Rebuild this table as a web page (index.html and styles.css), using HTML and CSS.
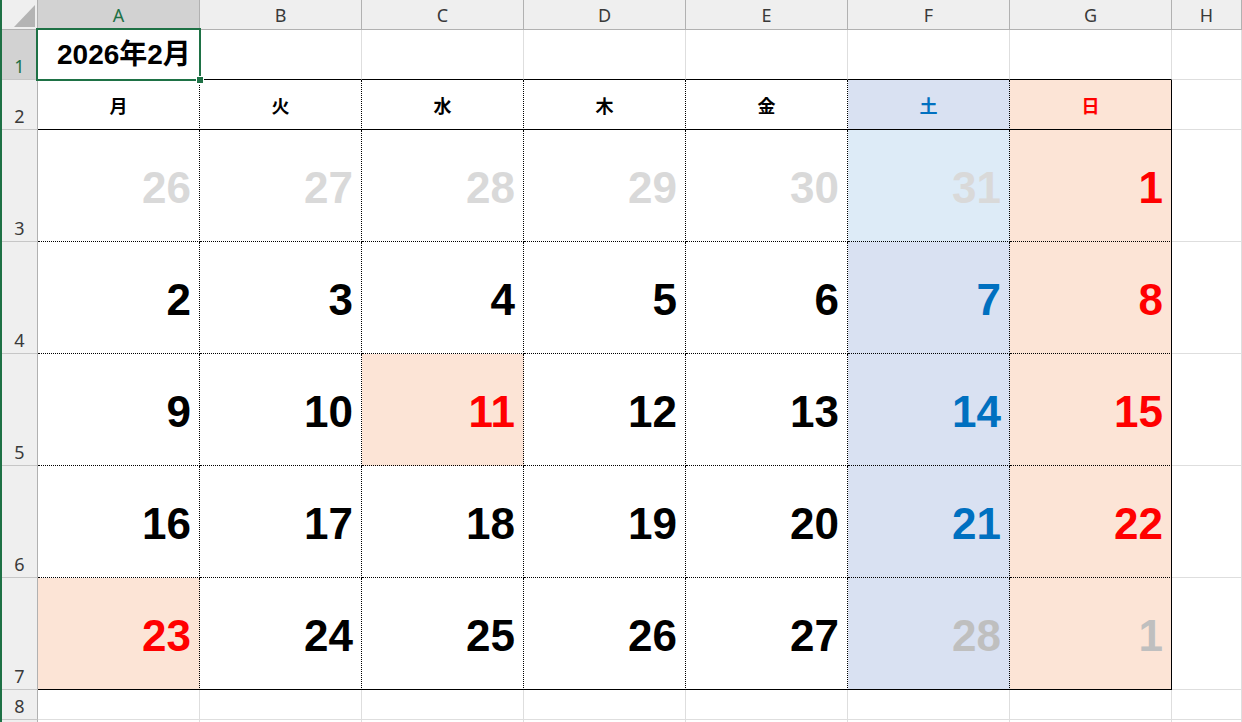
FILE: index.html
```html
<!DOCTYPE html>
<html lang="ja">
<head>
<meta charset="utf-8">
<title>2026年2月 カレンダー</title>
<link rel="stylesheet" href="styles.css">
</head>
<body>
<div class="sheet">
  <!-- column headers -->
  <div class="corner"><svg width="21" height="22" viewBox="0 0 21 22"><polygon points="0,22 21,22 21,0" fill="#b4b4b4"/></svg></div>
  <div class="ch sel">A</div>
  <div class="ch">B</div>
  <div class="ch">C</div>
  <div class="ch">D</div>
  <div class="ch">E</div>
  <div class="ch">F</div>
  <div class="ch">G</div>
  <div class="ch">H</div>

  <!-- row 1 -->
  <div class="rh sel">1</div>
  <div class="c title top-line">2026年2月</div>
  <div class="c top-line"></div>
  <div class="c top-line"></div>
  <div class="c top-line"></div>
  <div class="c top-line"></div>
  <div class="c top-line"></div>
  <div class="c top-line"></div>
  <div class="c"></div>

  <!-- row 2 -->
  <div class="rh">2</div>
  <div class="c dow">月</div>
  <div class="c dow">火</div>
  <div class="c dow">水</div>
  <div class="c dow">木</div>
  <div class="c dow">金</div>
  <div class="c dow sat t-blue">土</div>
  <div class="c dow sun t-red last-col">日</div>
  <div class="c"></div>

  <!-- row 3 -->
  <div class="rh">3</div>
  <div class="c day t-gray">26</div>
  <div class="c day t-gray">27</div>
  <div class="c day t-gray">28</div>
  <div class="c day t-gray">29</div>
  <div class="c day t-gray">30</div>
  <div class="c day sat-light t-gray">31</div>
  <div class="c day sun t-red last-col">1</div>
  <div class="c"></div>

  <!-- row 4 -->
  <div class="rh">4</div>
  <div class="c day">2</div>
  <div class="c day">3</div>
  <div class="c day">4</div>
  <div class="c day">5</div>
  <div class="c day">6</div>
  <div class="c day sat t-blue">7</div>
  <div class="c day sun t-red last-col">8</div>
  <div class="c"></div>

  <!-- row 5 -->
  <div class="rh">5</div>
  <div class="c day">9</div>
  <div class="c day">10</div>
  <div class="c day sun t-red">11</div>
  <div class="c day">12</div>
  <div class="c day">13</div>
  <div class="c day sat t-blue">14</div>
  <div class="c day sun t-red last-col">15</div>
  <div class="c"></div>

  <!-- row 6 -->
  <div class="rh">6</div>
  <div class="c day">16</div>
  <div class="c day">17</div>
  <div class="c day">18</div>
  <div class="c day">19</div>
  <div class="c day">20</div>
  <div class="c day sat t-blue">21</div>
  <div class="c day sun t-red last-col">22</div>
  <div class="c"></div>

  <!-- row 7 -->
  <div class="rh">7</div>
  <div class="c day bottom-line sun t-red">23</div>
  <div class="c day bottom-line">24</div>
  <div class="c day bottom-line">25</div>
  <div class="c day bottom-line">26</div>
  <div class="c day bottom-line">27</div>
  <div class="c day bottom-line sat t-gray2">28</div>
  <div class="c day bottom-line sun t-gray2 last-col">1</div>
  <div class="c"></div>

  <!-- row 8 -->
  <div class="rh">8</div>
  <div class="c"></div>
  <div class="c"></div>
  <div class="c"></div>
  <div class="c"></div>
  <div class="c"></div>
  <div class="c"></div>
  <div class="c"></div>
  <div class="c"></div>

  <!-- row 9 (only its top edge is visible) -->
  <div class="rh"></div>
  <div class="c"></div>
  <div class="c"></div>
  <div class="c"></div>
  <div class="c"></div>
  <div class="c"></div>
  <div class="c"></div>
  <div class="c"></div>
  <div class="c"></div>

  <!-- active cell selection -->
  <div class="selection"></div>
  <div class="fill-handle"></div>
</div>
</body>
</html>
```

FILE: styles.css
```css
html, body {
  margin: 0;
  padding: 0;
  background: #ffffff;
  overflow: hidden;
}

.sheet {
  position: relative;
  display: grid;
  grid-template-columns: 36px repeat(7, 162px) 1fr;
  grid-template-rows: 30px 50px 50px repeat(5, 112px) 30px 30px;
  width: 1240px;
  height: 722px;
  border-left: 2px solid #1e7145;
  font-family: "Liberation Sans", "Noto Sans CJK JP", sans-serif;
}

.corner {
  background: #efefef;
  border-right: 1px solid #b1b1b1;
  border-bottom: 1px solid #b1b1b1;
  display: flex;
  justify-content: flex-end;
  align-items: flex-end;
  padding: 0 2px 2px 0;
}

.ch {
  background: #efefef;
  border-right: 1px solid #b1b1b1;
  border-bottom: 1px solid #b1b1b1;
  display: flex;
  align-items: center;
  justify-content: center;
  font-family: "Noto Sans", sans-serif;
  font-size: 18px;
  line-height: 1;
  color: #3a3a3a;
}

.ch.sel {
  background: #d2d2d2;
  color: #1e7145;
}

.rh {
  background: #efefef;
  border-right: 1px solid #b1b1b1;
  border-bottom: 1px solid #c6c6c6;
  display: flex;
  align-items: flex-end;
  justify-content: center;
  padding-bottom: 4px;
  font-family: "Noto Sans", sans-serif;
  font-size: 18px;
  line-height: 1;
  color: #3a3a3a;
}

.rh.sel {
  background: #d2d2d2;
  color: #1e7145;
}

.c {
  border-right: 1px solid #dedede;
  border-bottom: 1px solid #dedede;
  background: #ffffff;
}

.top-line {
  border-bottom: 1px solid #000000;
}

.title {
  display: flex;
  align-items: center;
  padding-left: 19px;
  font-weight: 700;
  font-size: 28px;
  line-height: 1;
  color: #000000;
}

.dow {
  display: flex;
  align-items: center;
  justify-content: center;
  border-right: 1px dotted #000000;
  border-bottom: 1px solid #000000;
  font-family: "Noto Sans CJK JP", sans-serif;
  font-weight: 700;
  font-size: 18px;
  line-height: 1;
  color: #000000;
}

.day {
  display: flex;
  align-items: center;
  justify-content: flex-end;
  padding: 4px 8px 0 0;
  border-right: 1px dotted #000000;
  border-bottom: 1px dotted #000000;
  font-weight: 700;
  font-size: 44px;
  line-height: 1;
  color: #000000;
}

.bottom-line {
  border-bottom: 1px solid #000000;
}

.last-col {
  border-right: 1px solid #000000;
}

.sat { background: #d9e1f2; }
.sat-light { background: #ddebf7; }
.sun { background: #fce4d6; }

.t-blue { color: #0070c0; }
.t-red { color: #ff0000; }
.t-gray { color: #d9d9d9; }
.t-gray2 { color: #bfbfbf; }

.selection {
  position: absolute;
  left: 34px;
  top: 28px;
  width: 165px;
  height: 53px;
  box-sizing: border-box;
  border: 2px solid #1e7145;
  pointer-events: none;
}

.fill-handle {
  position: absolute;
  left: 195px;
  top: 77px;
  width: 6px;
  height: 6px;
  background: #1e7145;
  box-shadow: 0 0 0 1px #ffffff;
}
```
